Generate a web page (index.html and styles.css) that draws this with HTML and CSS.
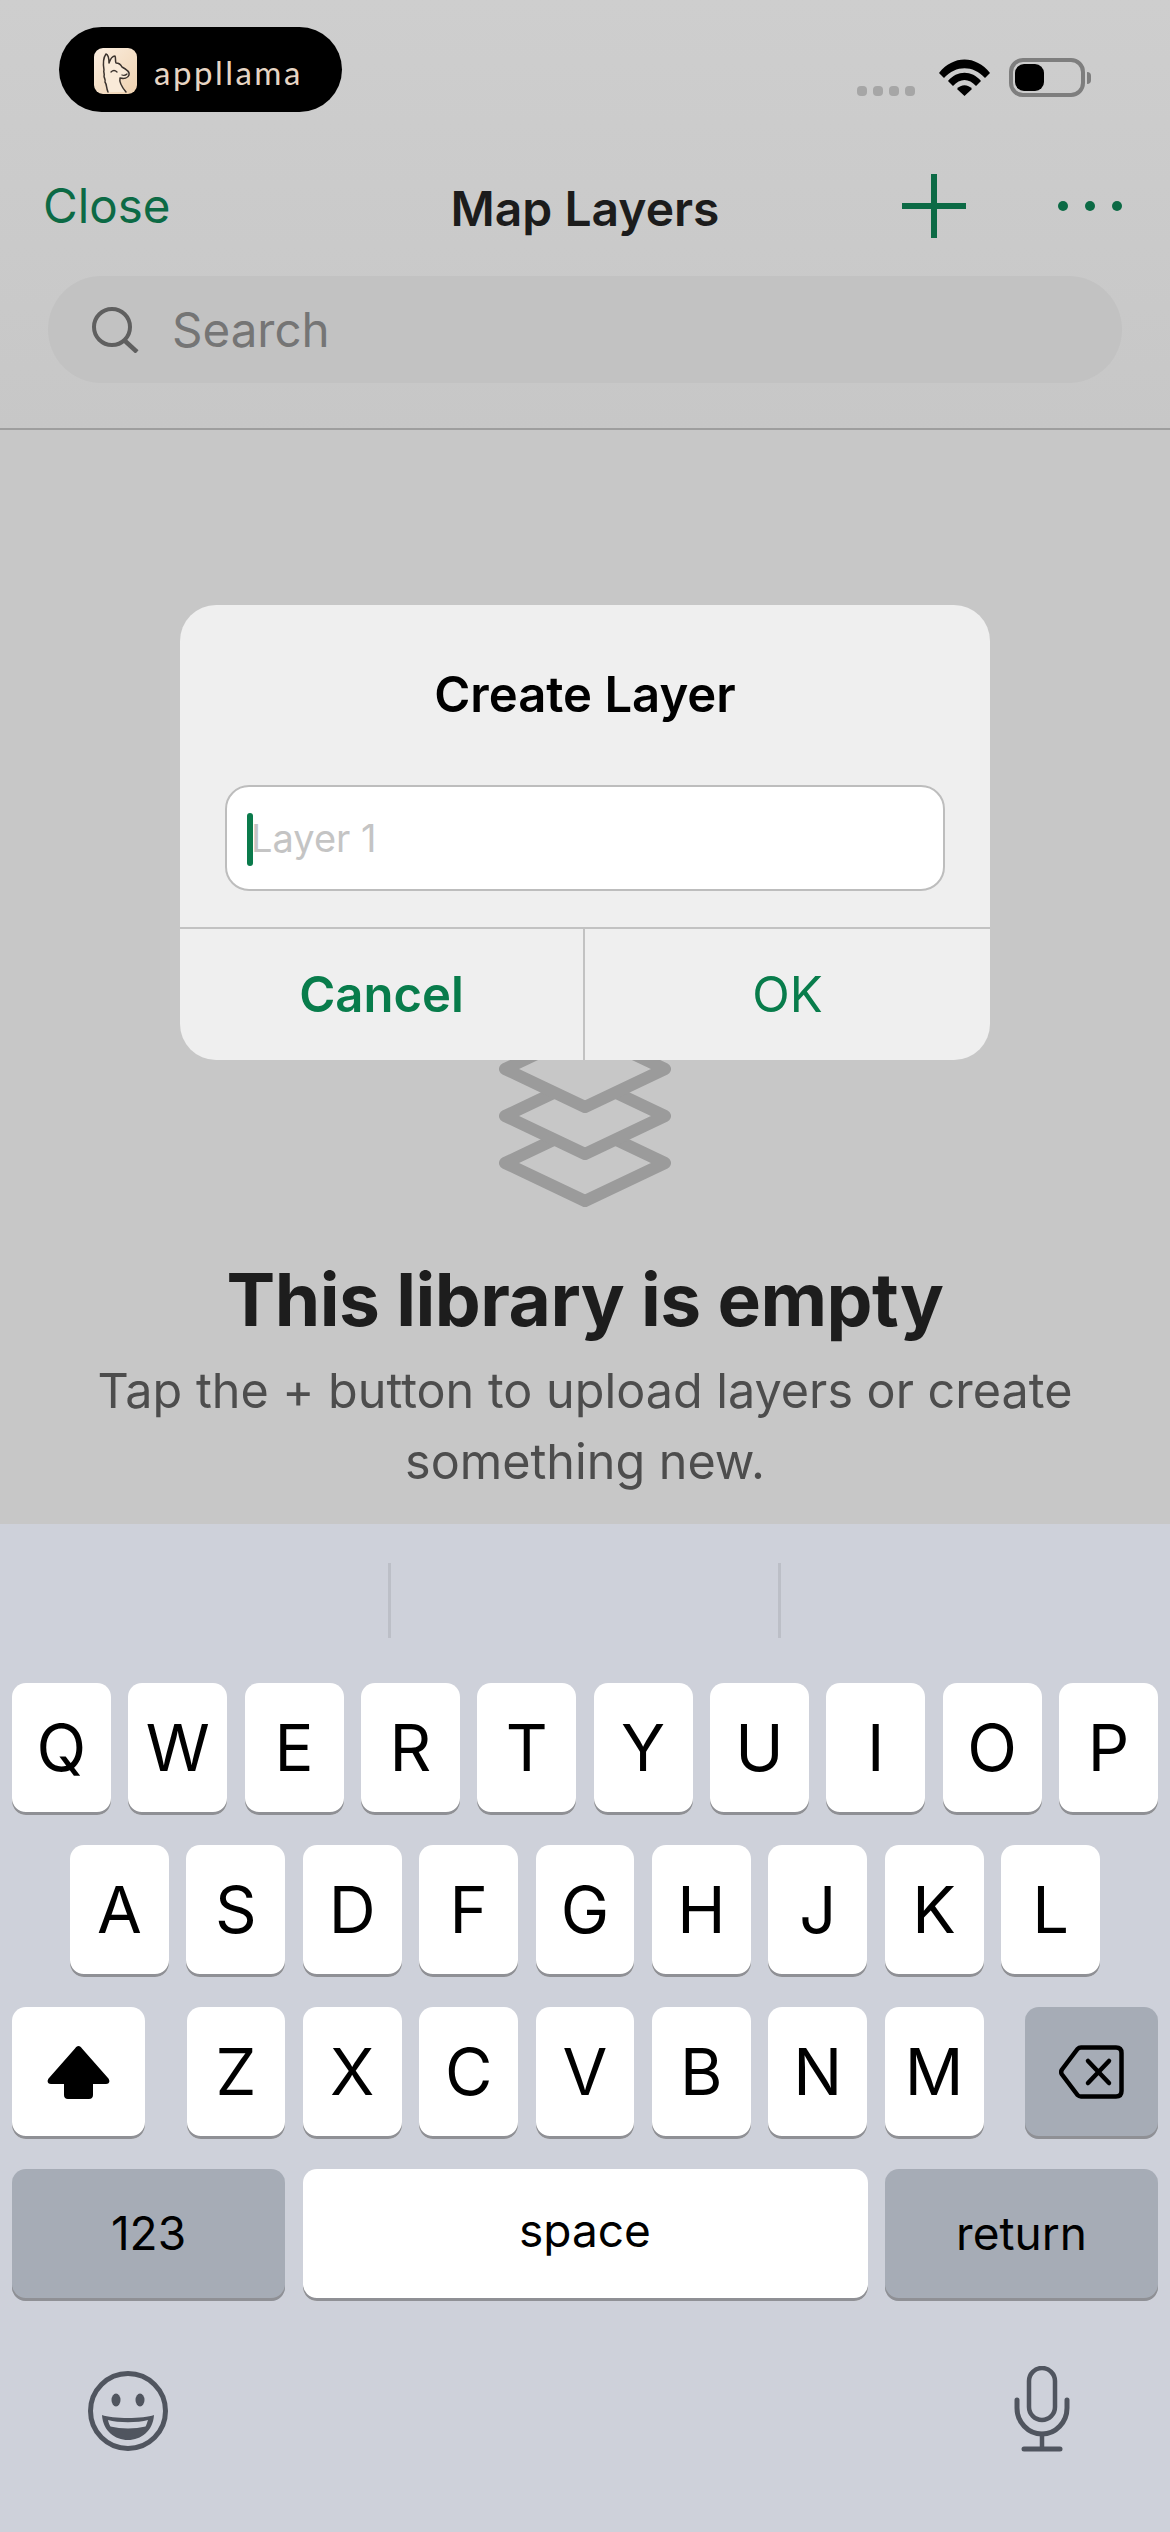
FILE: index.html
```html
<!DOCTYPE html>
<html lang="en">
<head>
<meta charset="utf-8">
<title>Map Layers</title>
<link rel="stylesheet" href="styles.css">
</head>
<body>
<div class="screen">
  <main class="app">
    <header class="top">
      <div class="status">
        <div class="brand">
          <svg class="brand-icon" viewBox="0 0 43 46" width="43" height="46">
            <defs><linearGradient id="lg" x1="0" y1="0" x2="1" y2="1"><stop offset="0" stop-color="#fbeee0"/><stop offset="1" stop-color="#efd2b0"/></linearGradient></defs>
            <rect width="43" height="46" rx="9" fill="url(#lg)"/>
            <path d="M14 44C12 39 13 37 11 34C12 32 10 30 10 28C11 26 9 24 10 22C9 16 9 10 12 6C15 7 15 12 15 15C16 12 18 8 21 8C22 10 21 13 22 15C25 15 27 17 28 19C32 21 36 24 35 27C34 30 30 31 26 30C25 34 27 38 32 44" fill="#f9ead8" stroke="#3b332e" stroke-width="1.500" stroke-linejoin="round" stroke-linecap="round"/>
            <path d="M17 24q3 -3 6 0M28 27q3 1 5 -1" fill="none" stroke="#3b332e" stroke-width="1.300" stroke-linecap="round"/>
          </svg>
          <span class="brand-name">appllama</span>
        </div>
        <div class="indicators">
          <div class="signal"><i></i><i></i><i></i><i></i></div>
          <svg class="wifi" viewBox="0 0 51 37" width="51" height="37">
            <path d="M0 14 C14 -4 37 -4 51 14 L46 19 C34 6 17 6 5 19 Z"/>
            <path d="M9 22 C18 11 33 11 42 22 L37 27 C30 19 21 19 14 27 Z"/>
            <path d="M18 30 C22 25 29 25 33 30 L25.500 37 Z"/>
          </svg>
          <div class="battery"><div class="battery-fill"></div></div>
          <div class="battery-cap"></div>
        </div>
      </div>
      <nav class="nav">
        <span class="nav-close">Close</span>
        <span class="nav-title">Map Layers</span>
        <div class="nav-actions">
          <svg viewBox="0 0 64 64" width="64" height="64" class="plus"><path d="M32 0V64M0 32H64" stroke="#0c6a45" stroke-width="6" fill="none"/></svg>
          <div class="dots"><i></i><i></i><i></i></div>
        </div>
      </nav>
      <div class="search">
        <svg viewBox="0 0 48 46" width="48" height="46"><circle cx="21" cy="20" r="18" fill="none" stroke="#5f5f5f" stroke-width="4"/><path d="M33 33L46 45" stroke="#5f5f5f" stroke-width="4.500" fill="none"/></svg>
        <span class="search-label">Search</span>
      </div>
    </header>
    <section class="empty">
      <svg class="layers" viewBox="0 0 172 182" width="172" height="182">
        <path d="M86 100L166 138L86 176L6 138Z" class="stroke"/>
        <path d="M86 53L166 91L86 129L6 91Z" class="stroke fill"/>
        <path d="M86 6L166 44L86 82L6 44Z" class="stroke fill"/>
      </svg>
      <h1 class="empty-title">This library is empty</h1>
      <p class="empty-text">Tap the + button to upload layers or create<br>something new.</p>
    </section>
  </main>

  <section class="dialog">
    <h2 class="dialog-title">Create Layer</h2>
    <div class="field"><span class="caret"></span><span class="placeholder">Layer 1</span></div>
    <div class="dialog-actions">
      <span class="action action-cancel">Cancel</span>
      <span class="action">OK</span>
    </div>
  </section>

  <section class="keyboard">
    <div class="suggest"><i></i><i></i></div>
    <div class="row">
      <span class="key">Q</span><span class="key">W</span><span class="key">E</span><span class="key">R</span><span class="key">T</span><span class="key">Y</span><span class="key">U</span><span class="key">I</span><span class="key">O</span><span class="key">P</span>
    </div>
    <div class="row row-home">
      <span class="key">A</span><span class="key">S</span><span class="key">D</span><span class="key">F</span><span class="key">G</span><span class="key">H</span><span class="key">J</span><span class="key">K</span><span class="key">L</span>
    </div>
    <div class="row row-shift">
      <span class="key key-mod key-light">
        <svg viewBox="0 0 63 54" width="63" height="54"><path d="M31.500 1C33 1 34 2 35 3.500L61 33C63.500 36 62.500 39 59 39H46V50C46 52.500 44.500 54 42 54H21C18.500 54 17 52.500 17 50V39H4C.5 39 -.5 36 2 33L28 3.500C29 2 30 1 31.500 1Z" fill="#000"/></svg>
      </span>
      <div class="letters">
        <span class="key">Z</span><span class="key">X</span><span class="key">C</span><span class="key">V</span><span class="key">B</span><span class="key">N</span><span class="key">M</span>
      </div>
      <span class="key key-mod">
        <svg viewBox="0 0 65 54" width="65" height="54" fill="none" stroke="#000" stroke-width="4.500" stroke-linejoin="round" stroke-linecap="round"><path d="M22 2.500H57C60.500 2.500 62.500 4.500 62.500 8V46C62.500 49.500 60.500 51.500 57 51.500H22C20.500 51.500 19.500 51 18.500 50L3 29.500C2 28 2 26 3 24.500L18.500 4C19.500 3 20.500 2.500 22 2.500Z"/><path d="M29 16L50 38M50 16L29 38"/></svg>
      </span>
    </div>
    <div class="row row-bottom">
      <span class="key key-mod key-wide key-small">123</span>
      <span class="key key-space key-small">space</span>
      <span class="key key-mod key-wide key-small">return</span>
    </div>
    <div class="kb-tools">
      <svg viewBox="0 0 80 80" width="80" height="80"><circle cx="40" cy="40" r="37.500" fill="none" stroke="#50555f" stroke-width="5"/><ellipse cx="28" cy="29" rx="4.500" ry="6.500" fill="#50555f"/><ellipse cx="52" cy="29" rx="4.500" ry="6.500" fill="#50555f"/><path d="M14 44C24 48 56 48 66 44C65 60 53 69 40 69C27 69 15 60 14 44Z" fill="#50555f"/><path d="M20 49C30 52 50 52 60 49C59 52 58.500 54 57.500 55.500C47 58 33 58 22.500 55.500C21.500 54 20.500 52 20 49Z" fill="#ced1da"/></svg>
      <svg class="mic" viewBox="0 0 56 86" width="56" height="86" fill="none" stroke="#50555f" stroke-linecap="round"><rect x="15" y="2" width="26" height="52" rx="13" stroke-width="4.500"/><path d="M3 34V42C3 56 14 68 28 68C42 68 53 56 53 42V34" stroke-width="5"/><path d="M28 68V82" stroke-width="4.500"/><path d="M10 83H46" stroke-width="5"/></svg>
    </div>
  </section>
</div>
</body>
</html>
```

FILE: styles.css
```css
* { box-sizing: border-box; }
html, body { margin: 0; padding: 0; }
body { font-family: Inter, "Liberation Sans", sans-serif; background: #c7c7c7; }

.screen {
  position: relative;
  width: 1170px;
  height: 2532px;
  overflow: hidden;
  display: flex;
  flex-direction: column;
}

.app {
  height: 1524px;
  background: linear-gradient(#cecece 0, #c7c7c7 430px);
  display: flex;
  flex-direction: column;
}

.top {
  height: 430px;
  border-bottom: 2px solid #9e9e9e;
}

.status {
  height: 135px;
  padding: 27px 79px 0 59px;
  display: flex;
  justify-content: space-between;
  align-items: flex-start;
}

.brand {
  width: 283px;
  height: 85px;
  background: #000;
  border-radius: 43px;
  padding-left: 35px;
  display: flex;
  align-items: center;
  gap: 17px;
}
.brand-icon { margin-top: 2px; }
.brand-name {
  color: #e6d5c4;
  font-family: Lato, sans-serif;
  font-weight: 400;
  font-size: 33px;
  letter-spacing: 2.500px;
  line-height: 1;
  margin-top: 6px;
}

.indicators {
  display: flex;
  align-items: flex-end;
  margin-top: 31px;
  height: 39px;
}
.signal { display: flex; gap: 6px; margin-right: 24px; margin-bottom: 1px; }
.signal i { width: 10px; height: 10px; border-radius: 4px; background: #a6a6a6; }
.wifi { fill: #000; margin-right: 19px; margin-bottom: 1px; }
.battery {
  width: 76px;
  height: 39px;
  border: 4px solid #7e7e7e;
  border-radius: 14px;
  padding: 2px;
}
.battery-fill { width: 29px; height: 27px; background: #000; border-radius: 9px; }
.battery-cap {
  width: 4px;
  height: 12px;
  margin: 0 0 13px 2px;
  background: #7e7e7e;
  border-radius: 0 6px 6px 0;
}

.nav {
  height: 141px;
  position: relative;
  display: flex;
  align-items: center;
  padding: 0 48px 0 43px;
  justify-content: space-between;
}
.nav-close { font-size: 47.500px; color: #0c6a45; }
.nav-title {
  position: absolute;
  left: 0;
  right: 0;
  top: 44px;
  text-align: center;
  font-size: 48px;
  font-weight: 600;
  color: #1c1c1c;
}
.nav-actions { display: flex; align-items: center; gap: 92px; }
.dots { display: flex; gap: 17px; }
.dots i { width: 10px; height: 10px; border-radius: 50%; background: #0c6a45; }

.search {
  margin: 0 48px;
  height: 107px;
  border-radius: 54px;
  background: #c2c2c2;
  display: flex;
  align-items: center;
  padding-left: 43px;
  gap: 33px;
}
.search-label { font-size: 47.500px; color: #757575; }

.empty {
  flex: 1;
  display: flex;
  flex-direction: column;
  align-items: center;
  padding-top: 595px;
}
.layers { display: block; margin-bottom: 53px; }
.stroke { fill: none; stroke: #9b9b9b; stroke-width: 12; stroke-linejoin: round; }
.stroke.fill { fill: #c7c7c7; }

.empty-title {
  margin: 0 0 15px;
  font-size: 73px;
  line-height: 80px;
  font-weight: 700;
  color: #1d1d1d;
  letter-spacing: -0.500px;
}
.empty-text {
  margin: 0;
  text-align: center;
  font-size: 48.500px;
  line-height: 71px;
  color: #4d4d4d;
}

.dialog {
  position: absolute;
  left: 180px;
  top: 605px;
  width: 810px;
  height: 455px;
  background: #efefef;
  border-radius: 36px;
  display: flex;
  flex-direction: column;
}
.dialog-title {
  margin: 0;
  height: 180px;
  padding-top: 61px;
  text-align: center;
  font-size: 49px;
  line-height: 58px;
  font-weight: 600;
  color: #000;
}
.field {
  margin: 0 45px;
  height: 106px;
  background: #fff;
  border: 2px solid #bdbdbd;
  border-radius: 24px;
  display: flex;
  align-items: center;
  padding-left: 20px;
  position: relative;
}
.caret {
  position: absolute;
  left: 20px;
  top: 26px;
  width: 6px;
  height: 53px;
  border-radius: 3px;
  background: #0a7a4b;
}
.placeholder { font-size: 38px; color: #c4c4c4; margin-left: 4px; }

.dialog-actions {
  margin-top: 36px;
  flex: 1;
  border-top: 2px solid #c2c2c2;
  display: grid;
  grid-template-columns: 405px 405px;
}
.action {
  display: flex;
  align-items: center;
  justify-content: center;
  font-size: 49px;
  color: #087c4b;
}
.action-cancel { font-weight: 600; border-right: 2px solid #c2c2c2; }

.keyboard {
  height: 1008px;
  background: #ced1da;
  display: flex;
  flex-direction: column;
  padding: 0 12px;
}
.suggest {
  height: 159px;
  padding: 39px 0 0 376px;
  display: flex;
  gap: 387px;
}
.suggest i { width: 3px; height: 75px; background: #bcbfc7; }

.row {
  display: flex;
  gap: 17.500px;
  height: 132px;
  margin-bottom: 30px;
}
.key {
  flex: 1;
  height: 132px;
  background: #fff;
  border-radius: 14px;
  box-shadow: inset 0 -3px 0 #8f9095;
  display: flex;
  align-items: center;
  justify-content: center;
  font-size: 65px;
  color: #000;
  padding-bottom: 3px;
}
.row-home { padding: 0 58px; }
.row-shift { gap: 0; justify-content: space-between; }
.letters { display: flex; gap: 17.500px; width: 797px; }
.key-mod { flex: none; width: 133px; background: #a6acb6; }
.key-light { background: #fff; }
.key-wide { width: 273px; padding-bottom: 5px; }
.key-small { font-size: 46px; }
.key-space { flex: 1; padding-bottom: 11px; }
.row-bottom .key-wide { flex: none; }

.kb-tools {
  display: flex;
  justify-content: space-between;
  align-items: center;
  padding: 38px 88px 0 76px;
}
.mic { margin-top: -3px; }
```
